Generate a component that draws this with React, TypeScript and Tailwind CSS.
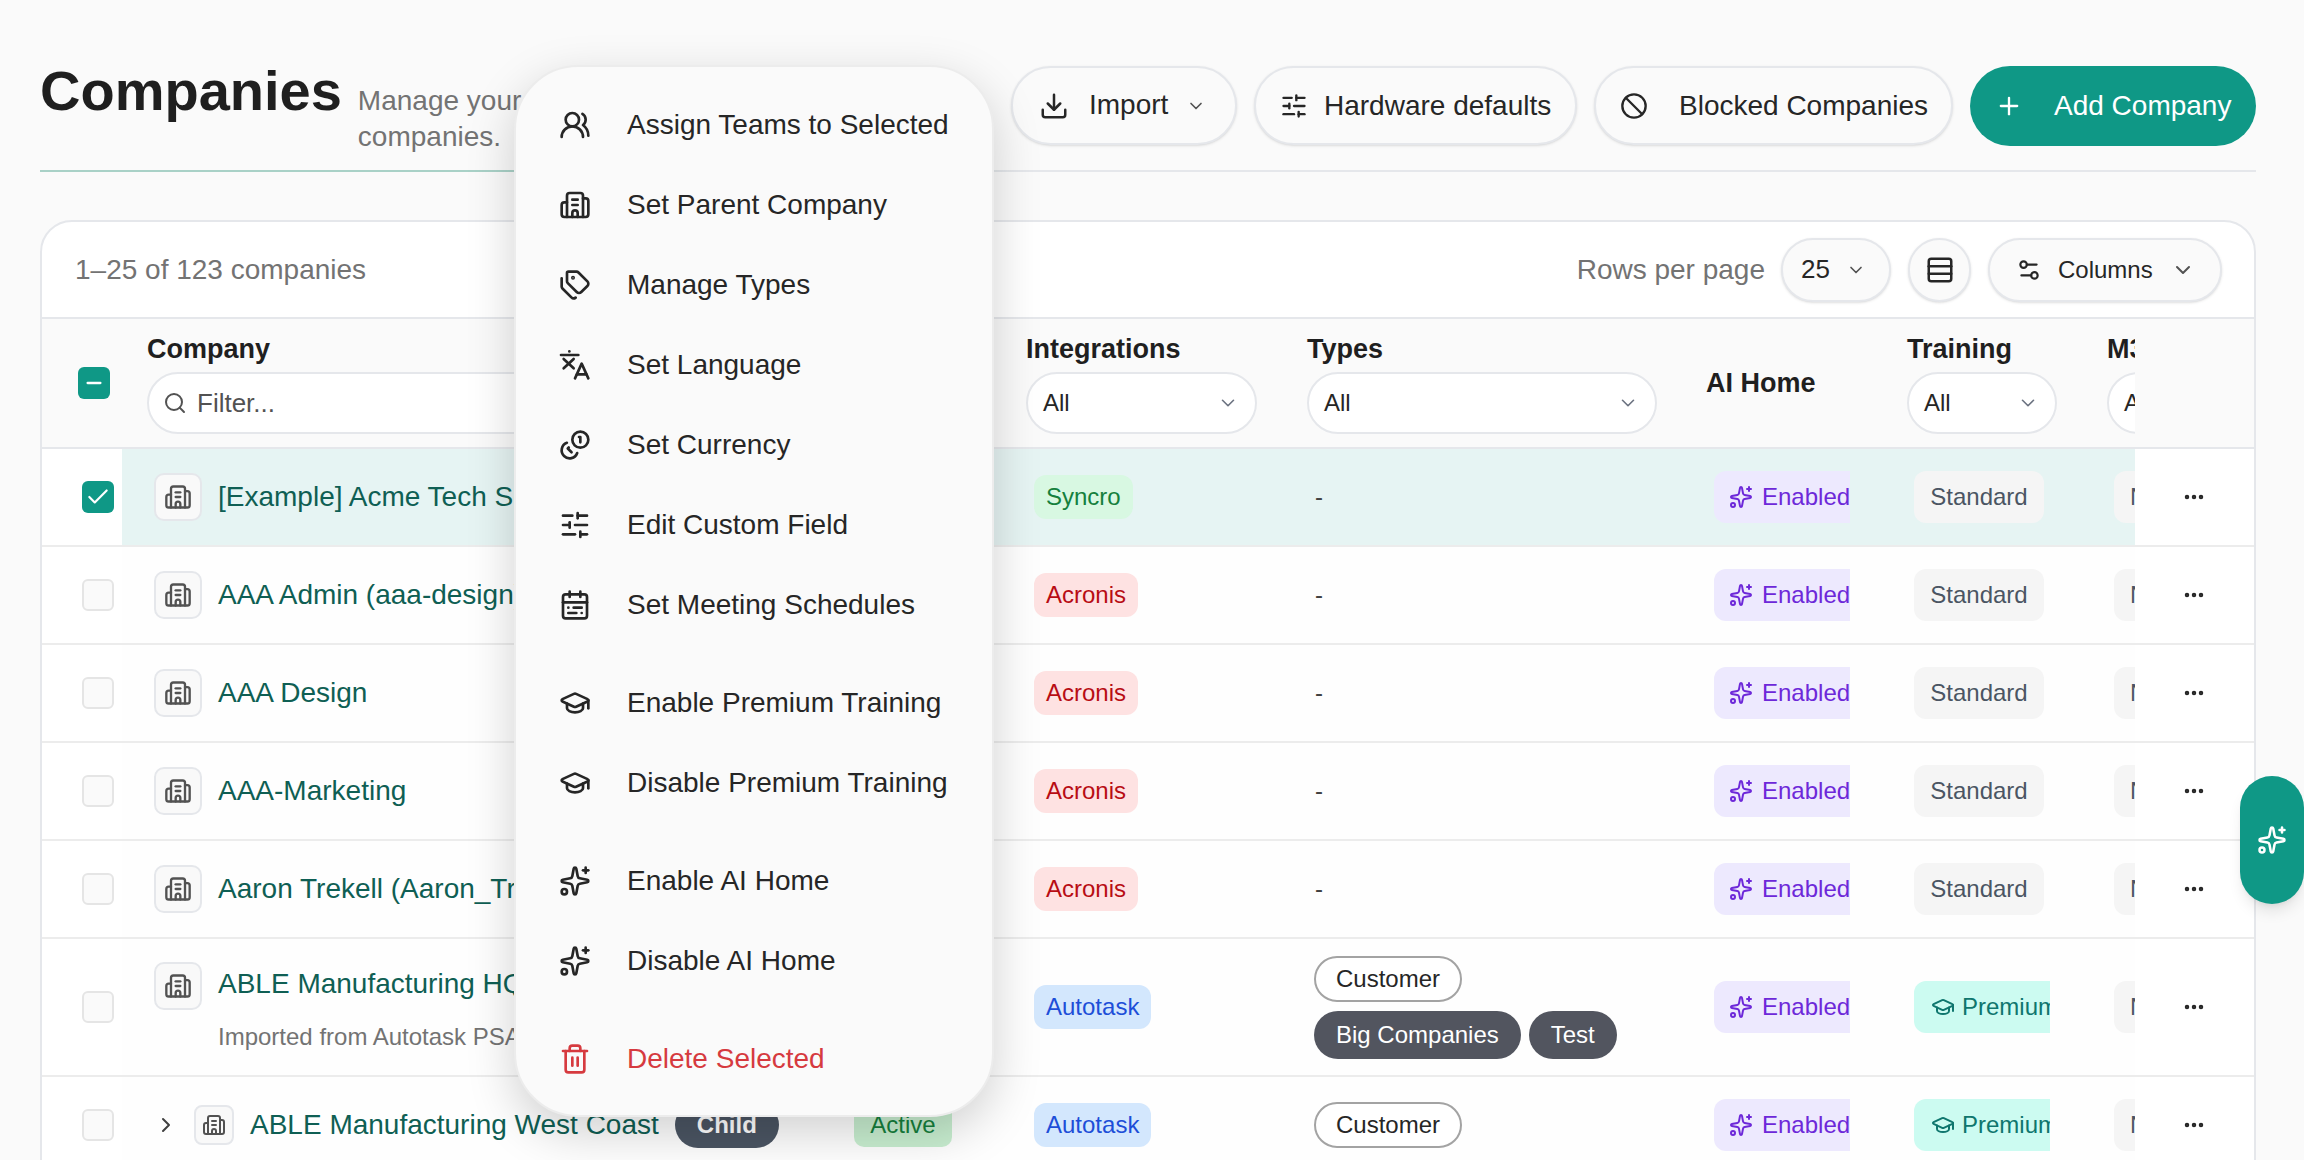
import React from "react";
import {
  UsersRound, Building2, Tags, SlidersHorizontal, CalendarRange, GraduationCap, Sparkles, Trash2,
  Download, ChevronDown, Ban, Plus, Rows3, Settings2, Search, Check, Minus, Ellipsis, ChevronRight,
} from "lucide-react";

const TranslateIcon = ({ className }: { className?: string }) => (
  <svg viewBox="0 0 24 24" fill="none" stroke="currentColor" strokeWidth={2} strokeLinecap="round" strokeLinejoin="round" className={className}>
    <path d="M1.5 4.5h13" />
    <path d="M7.75 1.8h.01" />
    <path d="M3.5 7.5l7.5 7" />
    <path d="M11 7.5l-7.5 7" />
    <path d="M12 22l5-11 5 11" />
    <path d="M13.5 19h7" />
  </svg>
);

const CoinsIcon = ({ className }: { className?: string }) => (
  <svg viewBox="0 0 24 24" fill="none" stroke="currentColor" strokeWidth={2} strokeLinecap="round" strokeLinejoin="round" className={className}>
    <circle cx="16" cy="8" r="6" />
    <path d="M5.91 10.37A6 6 0 1 0 13.66 18" />
    <path d="M15 6h1v4" />
    <path d="M7.29 13.88l-.7.71 2.82 2.82" />
  </svg>
);

const menu = [
  { label: "Assign Teams to Selected", Icon: UsersRound },
  { label: "Set Parent Company", Icon: Building2 },
  { label: "Manage Types", Icon: Tags },
  { label: "Set Language", Icon: TranslateIcon },
  { label: "Set Currency", Icon: CoinsIcon },
  { label: "Edit Custom Field", Icon: SlidersHorizontal },
  { label: "Set Meeting Schedules", Icon: CalendarRange },
  { sep: true },
  { label: "Enable Premium Training", Icon: GraduationCap },
  { label: "Disable Premium Training", Icon: GraduationCap },
  { sep: true },
  { label: "Enable AI Home", Icon: Sparkles },
  { label: "Disable AI Home", Icon: Sparkles },
  { sep: true },
  { label: "Delete Selected", Icon: Trash2, danger: true },
] as any[];

const acronis = { label: "Acronis", cls: "bg-[#fee2e2] text-[#b80d14]" };
const autotask = { label: "Autotask", cls: "bg-[#d3e7fd] text-[#1d4ed8]" };
const syncro = { label: "Syncro", cls: "bg-[#d8f8e2] text-[#15803d]" };

const rows = [
  { name: "[Example] Acme Tech Solutions", integ: syncro, selected: true, training: "Standard" },
  { name: "AAA Admin (aaa-design)", integ: acronis, training: "Standard" },
  { name: "AAA Design", integ: acronis, training: "Standard" },
  { name: "AAA-Marketing", integ: acronis, training: "Standard" },
  { name: "Aaron Trekell (Aaron_Trekell)", integ: acronis, training: "Standard" },
  { name: "ABLE Manufacturing HQ", sub: "Imported from Autotask PSA", integ: autotask, training: "Premium", types: [["Customer"], ["Big Companies", "Test"]] },
  { name: "ABLE Manufacturing West Coast", child: true, integ: autotask, training: "Premium", types: [["Customer"]] },
] as any[];

const FilterSelect = ({ w }: { w: string }) => (
  <div className={`${w} h-[62px] rounded-full border-2 border-[#e5e7eb] bg-white flex items-center justify-between pl-[15px] pr-[16px] text-[24px] text-[#262626] shrink-0`}>
    <span>All</span>
    <ChevronDown className="w-[22px] h-[22px] text-[#6b7280]" strokeWidth={1.75} />
  </div>
);

const HeadCell = ({ w, label, children }: { w: string; label: string; children: React.ReactNode }) => (
  <div className={`${w} shrink-0 pl-[10px] flex flex-col pt-[12px]`}>
    <div className="h-[36px] leading-[36px] text-[27px] font-bold text-[#1f1f1f] whitespace-nowrap">{label}</div>
    <div className="mt-[5px]">{children}</div>
  </div>
);

const ToolButton = ({ w, children }: { w: string; children: React.ReactNode }) => (
  <button className={`${w} h-[79px] rounded-full border-2 border-[#e5e7eb] bg-[#fafafa] shadow-sm flex items-center text-[28px] text-[#262626] whitespace-nowrap`}>
    {children}
  </button>
);

function Row({ r }: { r: any }) {
  const bg = r.selected ? "bg-[#e6f4f3]" : "bg-[#fefefe]";
  return (
    <div className={`flex border-b-2 border-[#ececec] ${r.sub || (r.types && r.types.length > 1) ? "h-[138px]" : "h-[98px]"} bg-white`}>
      <div className="w-[80px] shrink-0 flex items-center pl-[40px]">
        {r.selected ? (
          <div className="w-[32px] h-[32px] rounded-[6px] bg-[#0f9886] flex items-center justify-center">
            <Check className="w-[26px] h-[26px] text-white" strokeWidth={2} />
          </div>
        ) : (
          <div className="w-[32px] h-[32px] rounded-[6px] border-2 border-[#e5e5e5] bg-[#fafafa]" />
        )}
      </div>
      <div className={`flex-1 min-w-0 flex items-center overflow-hidden ${bg}`}>
        <div className="w-[720px] shrink-0 pl-[32px]">
          {r.child ? (
            <div className="flex items-center">
              <ChevronRight className="w-[24px] h-[24px] text-[#404040]" strokeWidth={2} />
              <div className="ml-[16px] w-[40px] h-[40px] rounded-[8px] border-2 border-[#e5e7eb] bg-[#f9f9f9] flex items-center justify-center">
                <Building2 className="w-[24px] h-[24px] text-[#525252]" strokeWidth={2} />
              </div>
              <span className="ml-[16px] text-[28px] text-[#0f5f54] whitespace-nowrap">{r.name}</span>
              <span className="ml-[16px] h-[46px] px-[22px] rounded-full bg-[#4b5563] text-white text-[24px] font-bold flex items-center">Child</span>
            </div>
          ) : r.sub ? (
            <div className="flex items-start">
              <div className="w-[48px] h-[48px] rounded-[10px] border-2 border-[#e5e7eb] bg-[#f9f9f9] flex items-center justify-center shrink-0">
                <Building2 className="w-[28px] h-[28px] text-[#525252]" strokeWidth={2} />
              </div>
              <div className="ml-[16px]">
                <div className="h-[44px] leading-[44px] text-[28px] text-[#0f5f54] whitespace-nowrap">{r.name}</div>
                <div className="mt-[16px] leading-[30px] text-[24px] text-[#737373] whitespace-nowrap">{r.sub}</div>
              </div>
            </div>
          ) : (
            <div className="flex items-center">
              <div className="w-[48px] h-[48px] rounded-[10px] border-2 border-[#e5e7eb] bg-[#f9f9f9] flex items-center justify-center shrink-0">
                <Building2 className="w-[28px] h-[28px] text-[#525252]" strokeWidth={2} />
              </div>
              <span className="ml-[16px] text-[28px] text-[#0f5f54] whitespace-nowrap">{r.name}</span>
            </div>
          )}
        </div>
        <div className="w-[174px] shrink-0 pl-[12px]">
          <span className="inline-flex h-[44px] w-[98px] items-center justify-center rounded-[10px] bg-[#c8eed0] text-[#15803d] text-[24px]">Active</span>
        </div>
        <div className="w-[281px] shrink-0 pl-[18px]">
          <span className={`inline-flex h-[44px] items-center rounded-[12px] px-[12px] text-[24px] ${r.integ.cls}`}>{r.integ.label}</span>
        </div>
        <div className="w-[399px] shrink-0 pl-[17px]">
          {r.types ? (
            <div className="flex flex-col gap-[9px]">
              {r.types.map((line: string[], i: number) => (
                <div key={i} className="flex gap-[8px]">
                  {line.map((t) => (
                    <span
                      key={t}
                      className={
                        t === "Customer"
                          ? "h-[46px] px-[20px] rounded-full border-2 border-[#a3a3a3] bg-white text-[#262626] text-[24px] flex items-center"
                          : "h-[48px] px-[22px] rounded-full bg-[#52555f] text-white text-[24px] flex items-center"
                      }
                    >
                      {t}
                    </span>
                  ))}
                </div>
              ))}
            </div>
          ) : (
            <span className="ml-[1px] text-[24px] text-[#404040]">-</span>
          )}
        </div>
        <div className="w-[201px] shrink-0 pl-[18px]">
          <div className="w-[136px] h-[52px] overflow-hidden rounded-l-[12px] bg-[#ede9fe] text-[#6d28d9] flex items-center pl-[15px] gap-[9px] text-[24px]">
            <Sparkles className="w-[24px] h-[24px] shrink-0" strokeWidth={2} />
            <span>Enabled</span>
          </div>
        </div>
        <div className="w-[200px] shrink-0 pl-[17px]">
          {r.training === "Premium" ? (
            <div className="w-[136px] h-[52px] overflow-hidden rounded-l-[12px] bg-[#ccfbf1] text-[#0f766e] flex items-center pl-[17px] gap-[7px] text-[24px]">
              <GraduationCap className="w-[24px] h-[24px] shrink-0" strokeWidth={2} />
              <span>Premium</span>
            </div>
          ) : (
            <div className="w-[130px] h-[52px] rounded-[12px] bg-[#f5f5f5] text-[#4b5563] flex items-center justify-center text-[24px]">Standard</div>
          )}
        </div>
        <div className="w-[38px] shrink-0 pl-[17px] overflow-hidden">
          <div className="w-[60px] h-[52px] rounded-l-[12px] bg-[#f5f5f5] text-[#4b5563] flex items-center pl-[16px] text-[24px]">None</div>
        </div>
      </div>
      <div className="w-[119px] shrink-0 bg-white flex items-center justify-center pr-[1px]">
        <Ellipsis className="w-[24px] h-[24px] text-[#262626]" strokeWidth={2.5} />
      </div>
    </div>
  );
}

export default function App() {
  return (
    <div className="relative w-[2304px] h-[1160px] overflow-hidden bg-[#fafafa] font-['Liberation_Sans',sans-serif]">
      <div className="pl-[40px] pr-[48px] pt-[66px]">
        {/* page header */}
        <div className="flex items-start justify-between h-[106px] border-b-2 border-[#e5e7eb] relative">
          <div className="absolute left-0 right-0 bottom-[-2px] h-[2px] bg-gradient-to-r from-[#a9d1c7] from-[21%] to-[#e5e7eb] to-[44%]" />
          <div className="flex items-baseline gap-[16px] mt-[-5px]">
            <h1 className="text-[56px] leading-[60px] font-bold text-[#1f1f1f]">Companies</h1>
            <p className="w-[240px] text-[28px] leading-[36px] text-[#737373]">Manage your companies.</p>
          </div>
          <div className="flex items-start gap-[17px]">
            <ToolButton w="w-[226px]">
              <Download className="ml-[26px] w-[30px] h-[30px]" strokeWidth={2} />
              <span className="ml-[20px] mt-[-1px]">Import</span>
              <ChevronDown className="ml-[18px] w-[20px] h-[20px] text-[#525252]" strokeWidth={2} />
            </ToolButton>
            <ToolButton w="w-[323px]">
              <SlidersHorizontal className="ml-[24px] w-[28px] h-[28px]" strokeWidth={2} />
              <span className="ml-[16px]">Hardware defaults</span>
            </ToolButton>
            <ToolButton w="w-[359px]">
              <Ban className="ml-[24px] w-[28px] h-[28px]" strokeWidth={2} />
              <span className="ml-[31px]">Blocked Companies</span>
            </ToolButton>
            <button className="w-[286px] h-[80px] rounded-full bg-[#0f9886] text-white flex items-center text-[28px] whitespace-nowrap">
              <Plus className="ml-[25px] w-[28px] h-[28px]" strokeWidth={2} />
              <span className="ml-[31px]">Add Company</span>
            </button>
          </div>
        </div>

        {/* card */}
        <div className="mt-[48px] rounded-t-[32px] border-2 border-[#e5e7eb] bg-white overflow-hidden">
          <div className="h-[97px] flex items-center justify-between pl-[33px] pr-[32px] border-b-2 border-[#e5e7eb]">
            <span className="text-[28px] text-[#737373]">1–25 of 123 companies</span>
            <div className="flex items-center">
              <span className="text-[28px] text-[#737373]">Rows per page</span>
              <div className="ml-[16px] w-[110px] h-[64px] rounded-full border-2 border-[#e5e7eb] bg-[#fafafa] shadow-sm flex items-center pl-[18px] text-[26px] text-[#262626]">
                <span>25</span>
                <ChevronDown className="ml-[16px] w-[20px] h-[20px] text-[#525252]" strokeWidth={2} />
              </div>
              <div className="ml-[17px] w-[63px] h-[64px] rounded-full border-2 border-[#e5e7eb] bg-[#fafafa] shadow-sm flex items-center justify-center">
                <Rows3 className="w-[30px] h-[30px] text-[#262626]" strokeWidth={2} />
              </div>
              <div className="ml-[17px] w-[234px] h-[64px] rounded-full border-2 border-[#e5e7eb] bg-[#fafafa] shadow-sm flex items-center pl-[26px] text-[24px] text-[#262626]">
                <Settings2 className="w-[26px] h-[26px]" strokeWidth={2} />
                <span className="ml-[16px]">Columns</span>
                <ChevronDown className="ml-[18px] w-[24px] h-[24px] text-[#525252]" strokeWidth={2} />
              </div>
            </div>
          </div>

          {/* header row */}
          <div className="flex h-[130px] border-b-2 border-[#e5e7eb] bg-[#fafafa]">
            <div className="w-[80px] shrink-0 flex items-center pl-[36px]">
              <div className="w-[32px] h-[32px] rounded-[6px] bg-[#0f9886] flex items-center justify-center">
                <Minus className="w-[22px] h-[22px] text-white" strokeWidth={2.5} />
              </div>
            </div>
            <div className="flex-1 min-w-0 flex overflow-hidden">
              <div className="w-[720px] shrink-0 pl-[25px] pt-[12px] flex flex-col">
                <div className="h-[36px] leading-[36px] text-[27px] font-bold text-[#1f1f1f]">Company</div>
                <div className="mt-[5px] w-[420px] h-[62px] rounded-full border-2 border-[#e5e7eb] bg-white flex items-center pl-[14px] text-[26px] text-[#525252]">
                  <Search className="w-[24px] h-[24px] text-[#525252]" strokeWidth={2} />
                  <span className="ml-[10px]">Filter...</span>
                </div>
              </div>
              <HeadCell w="w-[174px]" label="Status"><FilterSelect w="w-[130px]" /></HeadCell>
              <HeadCell w="w-[281px]" label="Integrations"><FilterSelect w="w-[231px]" /></HeadCell>
              <HeadCell w="w-[399px]" label="Types"><FilterSelect w="w-[350px]" /></HeadCell>
              <div className="w-[201px] shrink-0 pl-[10px] flex items-center text-[27px] font-bold text-[#1f1f1f]">AI Home</div>
              <HeadCell w="w-[200px]" label="Training"><FilterSelect w="w-[150px]" /></HeadCell>
              <div className="w-[38px] shrink-0 overflow-hidden">
                <HeadCell w="w-[150px]" label="M365"><FilterSelect w="w-[120px]" /></HeadCell>
              </div>
            </div>
            <div className="w-[119px] shrink-0" />
          </div>

          {rows.map((r) => <Row key={r.name} r={r} />)}
        </div>
      </div>

      {/* bulk actions menu */}
      <div className="absolute left-[514px] top-[65px] w-[480px] h-[1052px] rounded-[64px] border-2 border-[#ececec] bg-[#fafafa] shadow-[0_16px_48px_rgba(0,0,0,0.18)] pt-[18px]">
        {menu.map((m, i) =>
          m.sep ? (
            <div key={i} className="h-[18px]" />
          ) : (
            <div key={i} className={`h-[80px] flex items-center pl-[43px] text-[28px] whitespace-nowrap ${m.danger ? "text-[#d63a3f]" : "text-[#262626]"}`}>
              <m.Icon className="w-[32px] h-[32px] shrink-0" />
              <span className="ml-[36px]">{m.label}</span>
            </div>
          )
        )}
      </div>

      {/* floating assistant tab */}
      <div className="absolute right-0 top-[776px] w-[64px] h-[128px] rounded-[32px] bg-[#0f9886] shadow-lg flex items-center justify-center">
        <Sparkles className="w-[30px] h-[30px] text-white" strokeWidth={2} />
      </div>
    </div>
  );
}
